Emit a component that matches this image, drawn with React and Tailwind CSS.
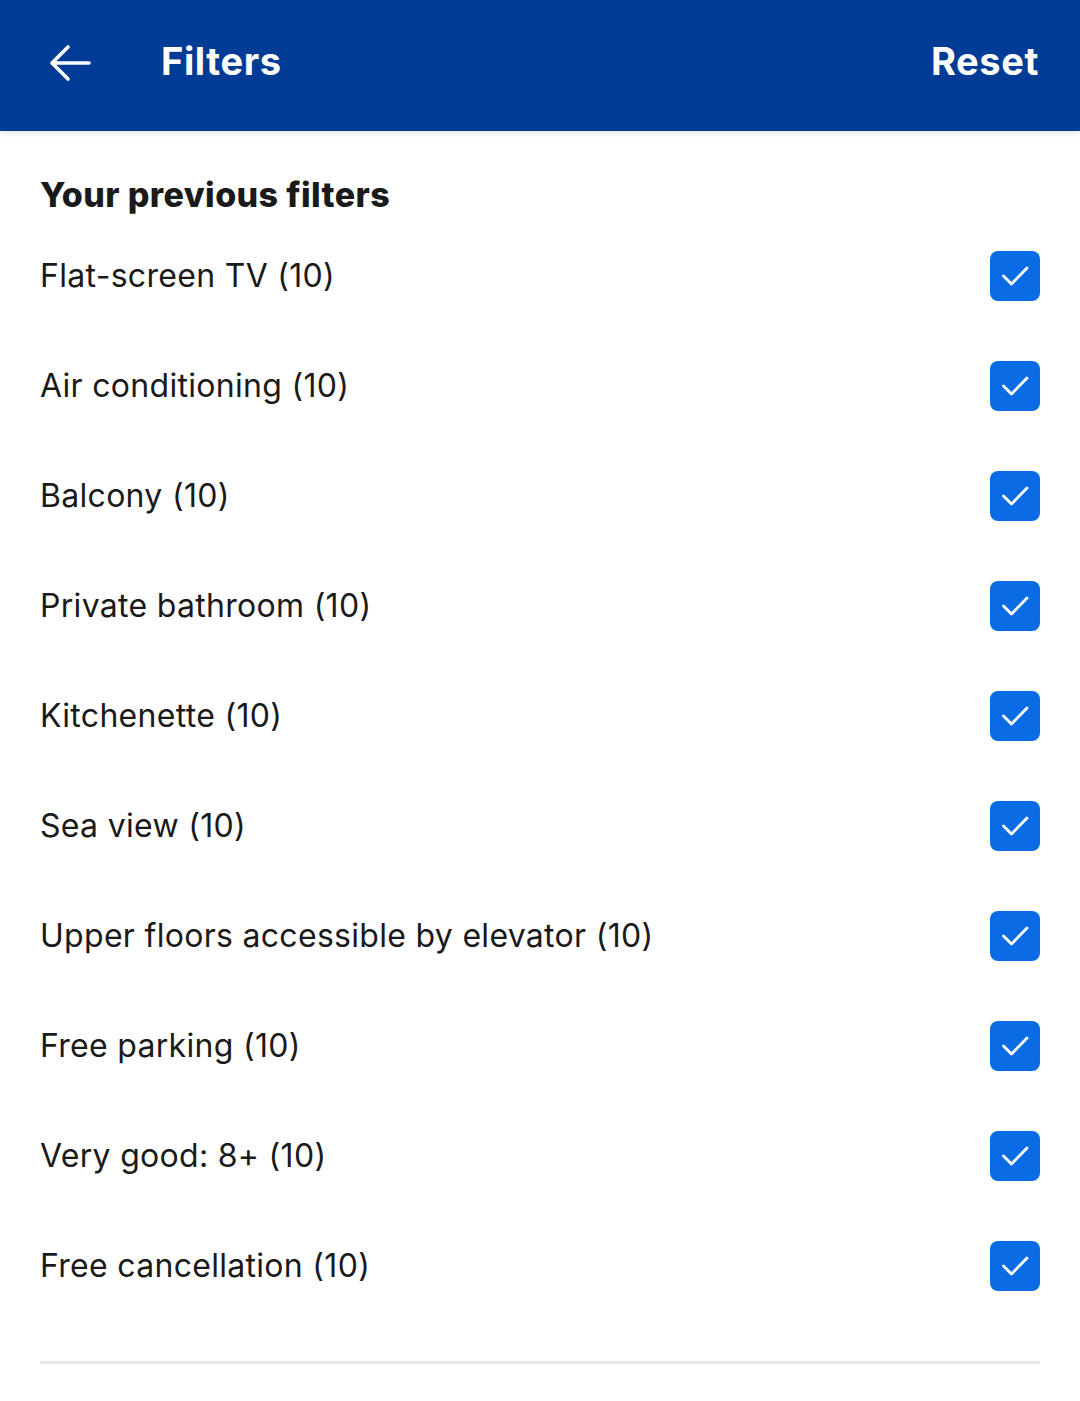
import React from "react";

const items = [
  "Flat-screen TV (10)",
  "Air conditioning (10)",
  "Balcony (10)",
  "Private bathroom (10)",
  "Kitchenette (10)",
  "Sea view (10)",
  "Upper floors accessible by elevator (10)",
  "Free parking (10)",
  "Very good: 8+ (10)",
  "Free cancellation (10)",
];

function Check() {
  return (
    <div className="w-[50px] h-[50px] rounded-[8px] bg-[#0a6ce4] flex items-center justify-center shrink-0">
      <svg width="32" height="32" viewBox="0 0 32 32" fill="none">
        <path d="M4.5 16 L12.5 24 L28 8" stroke="white" strokeWidth="2.8" strokeLinecap="round" strokeLinejoin="round" />
      </svg>
    </div>
  );
}

export default function App() {
  return (
    <div className="w-[1080px] h-[1401px] bg-white overflow-hidden" style={{ fontFamily: "Inter, 'Noto Sans', sans-serif" }}>
      <div className="h-[131px] bg-[#003b95] flex items-center pl-[48px] pr-[41px] pb-[9px] shadow-[0_2px_6px_rgba(0,0,0,0.12)] relative">
        <svg width="44" height="40" viewBox="0 0 44 40" fill="none" className="shrink-0 mt-[4px]">
          <path d="M41 20 H4 M20 4 L4 20 L20 36" stroke="white" strokeWidth="3.6" strokeLinecap="round" strokeLinejoin="round" />
        </svg>
        <div className="ml-[69px] text-white text-[38px] font-bold tracking-[0.6px]">Filters</div>
        <div className="ml-auto text-white text-[38px] font-bold tracking-[0.6px]">Reset</div>
      </div>
      <div className="px-[40px]">
        <div className="pt-[43px] text-[34px] font-extrabold text-[#1a1a1a] leading-[42px] tracking-[0.4px]">Your previous filters</div>
        <div className="mt-[5px]">
          {items.map((t) => (
            <div key={t} className="h-[110px] flex items-center justify-between">
              <span className="text-[32px] text-[#1a1a1a] leading-none tracking-[0.3px]">{t}</span>
              <Check />
            </div>
          ))}
        </div>
        <div className="mt-[40px] h-[3px] bg-[#e7e7e7]" />
      </div>
    </div>
  );
}
